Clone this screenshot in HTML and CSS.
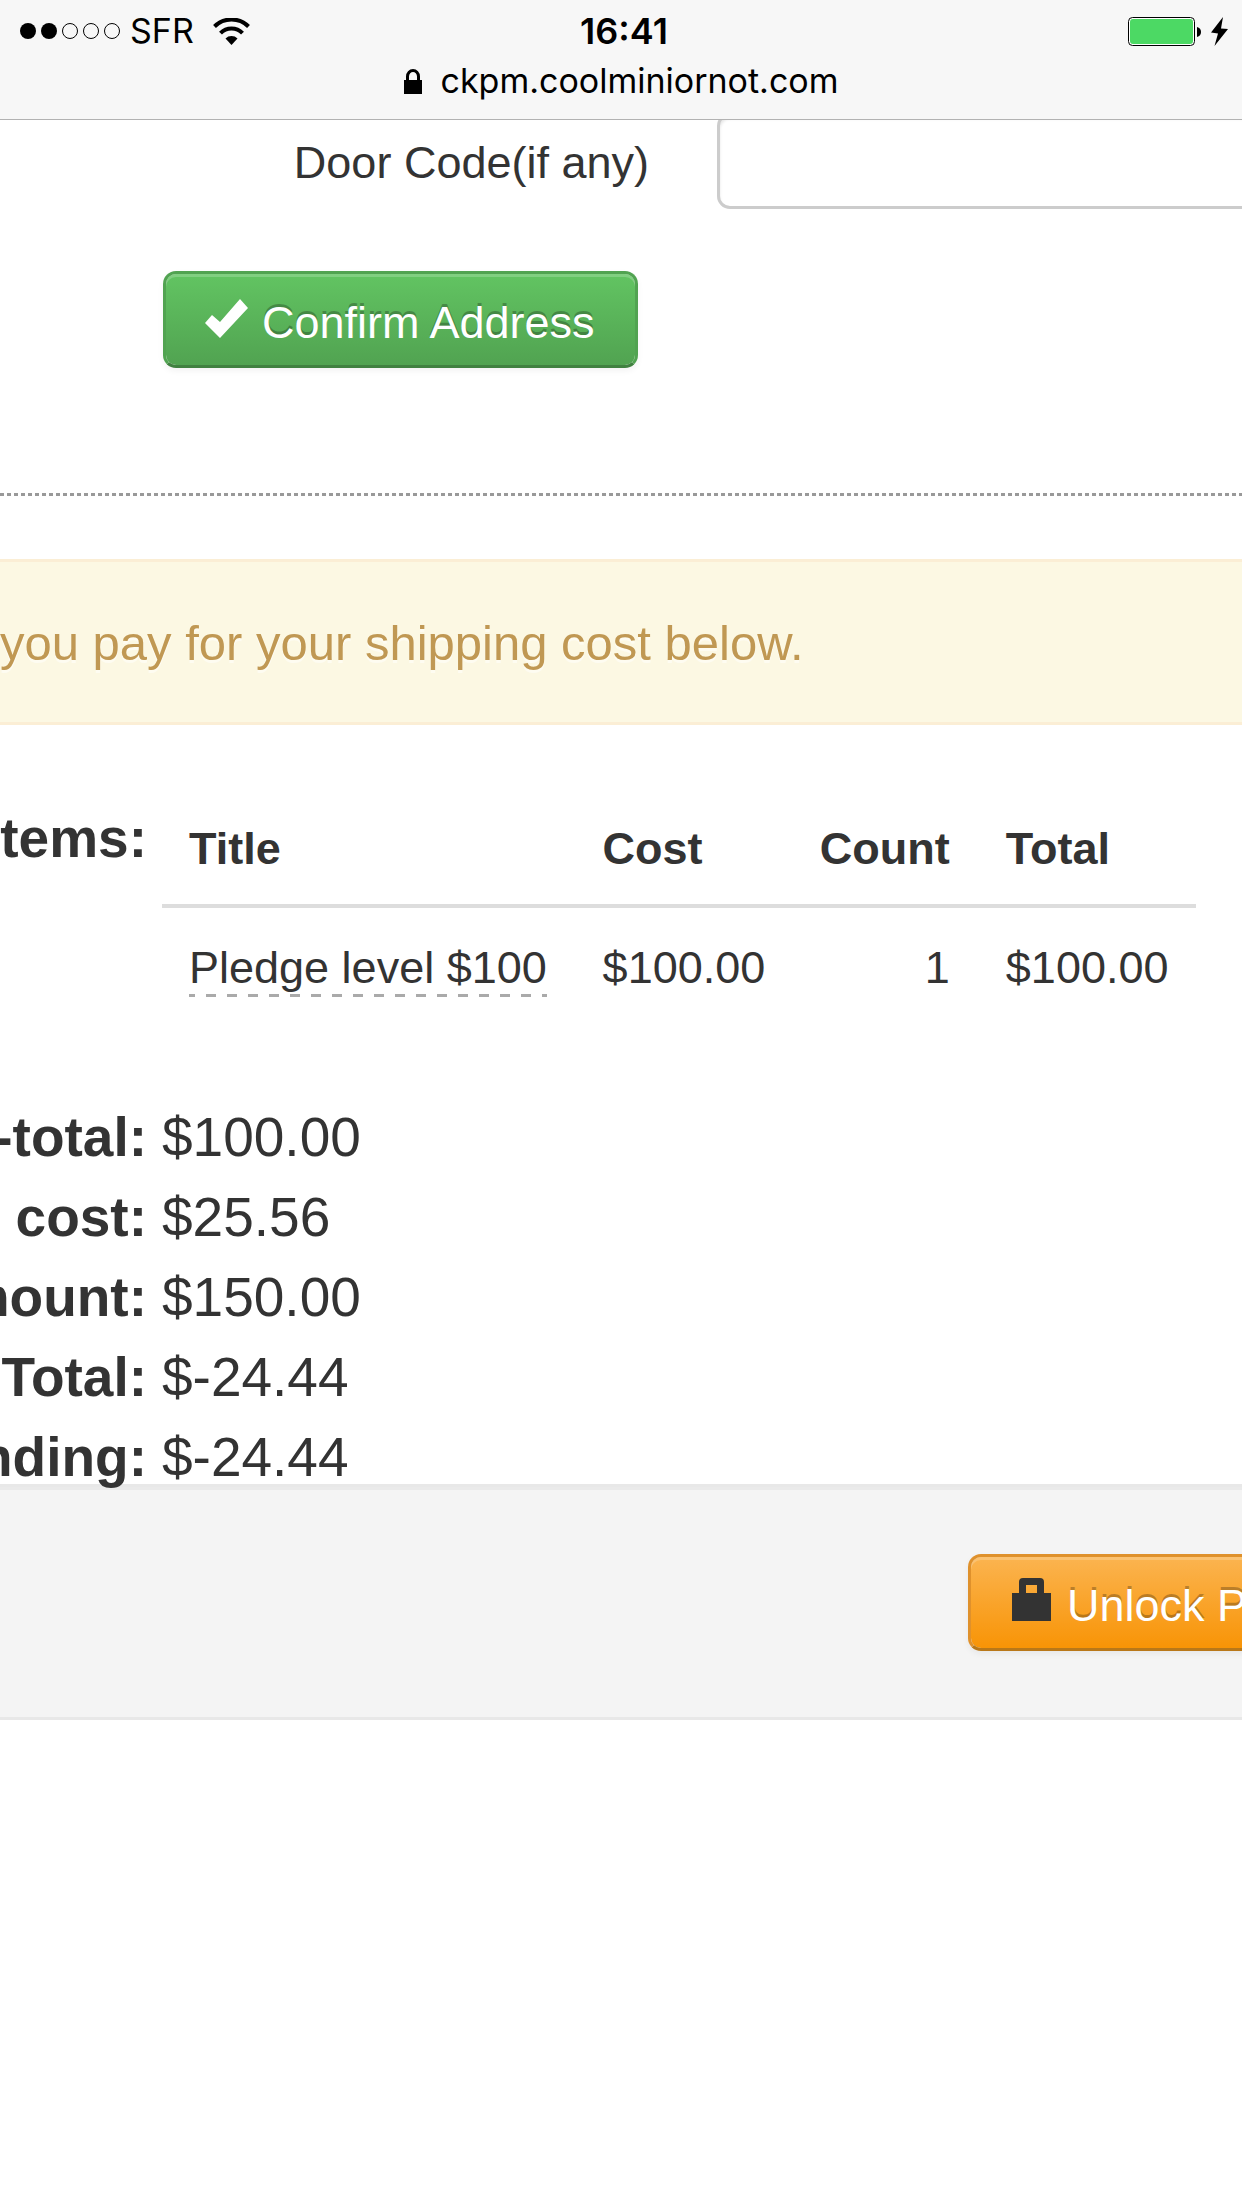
FILE: index.html
```
<!DOCTYPE html>
<html lang="en">
<head>
<meta charset="utf-8">
<meta name="viewport" content="width=device-width, initial-scale=1">
<title>ckpm.coolminiornot.com</title>
<link rel="stylesheet" href="styles.css">
</head>
<body>
<header class="browser-bar">
  <div class="status">
    <div class="status-left">
      <svg class="signal" width="100" height="16" viewBox="0 0 100 16" aria-hidden="true">
        <circle cx="8" cy="8" r="8"/><circle cx="29" cy="8" r="8"/>
        <g fill="none" stroke="#000"><circle cx="50" cy="8" r="7.5"/><circle cx="71" cy="8" r="7.5"/><circle cx="92" cy="8" r="7.5"/></g>
      </svg>
      <span class="carrier">SFR</span>
      <svg class="wifi" width="37" height="27" viewBox="0 0 37 27" aria-hidden="true">
        <g fill="none" stroke="#000" stroke-width="4"><path d="M1.500 8.500A24 24 0 0 1 35.500 8.500"/><path d="M7.500 15.200A15.200 15.200 0 0 1 29.500 15.200"/></g>
        <path d="M12.500 20.500A8.500 8.500 0 0 1 24.500 20.500L18.500 27z"/>
      </svg>
    </div>
    <time class="clock">16:41</time>
    <div class="status-right">
      <svg class="battery" width="73" height="29" viewBox="0 0 73 29" aria-hidden="true">
        <rect x=".5" y=".5" width="66" height="28" rx="4" fill="#fff" stroke="#000"/>
        <rect x="2" y="2" width="63" height="25" rx="3" fill="#4cd964"/>
        <path d="M69 10q4 1 4 5t-4 5z"/>
      </svg>
      <svg class="bolt" width="17" height="29" viewBox="0 0 17 29" aria-hidden="true"><path d="M12 0L0 15.500l7 1L3.500 29L17 12l-7-.5z"/></svg>
    </div>
  </div>
  <div class="address">
    <svg width="18" height="25" viewBox="0 0 18 25" aria-hidden="true"><path d="M0 11h18v14H0z"/><path d="M3.500 12V7.500a5.500 6 0 0 1 11 0V12" fill="none" stroke="#000" stroke-width="3"/></svg>
    <span>ckpm.coolminiornot.com</span>
  </div>
</header>
<main class="page">
  <form class="address-form">
    <div class="field">
      <label for="door-code">Door Code(if any)</label>
      <input id="door-code" type="text">
    </div>
    <button class="btn btn-success" type="button">
      <svg width="45" height="45" viewBox="0 0 45 45" aria-hidden="true"><path d="M1 28L8 20L16 27L36 4L44 13L16 43z" fill="#fff"/></svg>
      <span>Confirm Address</span>
    </button>
  </form>
  <hr class="divider">
  <p class="alert">you pay for your shipping cost below.</p>
  <dl class="summary">
    <dt>tems:</dt>
    <dd class="items">
      <table>
        <colgroup><col class="col-title"><col class="col-cost"><col class="col-count"><col class="col-total"></colgroup>
        <thead><tr><th>Title</th><th>Cost</th><th>Count</th><th>Total</th></tr></thead>
        <tbody><tr><td><span class="pledge">Pledge level $100</span></td><td>$100.00</td><td class="count">1</td><td>$100.00</td></tr></tbody>
      </table>
    </dd>
    <dt>-total:</dt><dd>$100.00</dd>
    <dt>cost:</dt><dd>$25.56</dd>
    <dt>mount:</dt><dd>$150.00</dd>
    <dt>Total:</dt><dd>$-24.44</dd>
    <dt>nding:</dt><dd>$-24.44</dd>
  </dl>
  <div class="actions">
    <button class="btn btn-warning" type="button">
      <svg width="42" height="45" viewBox="0 0 42 45" aria-hidden="true"><path d="M0 16h7V5q0-4 4-4h17q4 0 4 4v11h7v28H0zM14 16h11V8H14z" fill="#333" fill-rule="evenodd"/></svg>
      <span>Unlock P</span>
    </button>
  </div>
</main>
</body>
</html>
```
FILE: styles.css
```
* { box-sizing: border-box; }

body {
  margin: 0;
  overflow-x: hidden;
  background: #fff;
  color: #333;
  font-family: "Liberation Sans", Arial, sans-serif;
  font-size: 45px;
  line-height: 64px;
}

svg { display: block; flex: none; }

.browser-bar {
  position: relative;
  z-index: 1;
  height: 120px;
  padding: 8px 14px 0 20px;
  background: #f7f7f7;
  border-bottom: 1px solid #b2b2b2;
  color: #000;
  font-family: Inter, sans-serif;
  font-size: 34px;
  line-height: 46px;
}

.status {
  display: grid;
  grid-template-columns: 1fr auto 1fr;
  align-items: center;
}

.status-left, .status-right { display: flex; align-items: center; }
.status-left { gap: 10px; }
.wifi { margin-left: 9px; }
.status-right { justify-content: flex-end; gap: 10px; }
.clock { font-size: 36px; font-weight: 600; }

.address {
  display: flex;
  justify-content: center;
  align-items: center;
  gap: 19px;
  padding: 4px 6px 0 0;
}

.page { overflow: hidden; margin-top: -7px; }

.field {
  display: grid;
  grid-template-columns: 649px 1fr;
  gap: 68px;
  margin-right: -16px;
}

.field label { padding-top: 18px; text-align: right; }

.field input {
  width: 100%;
  height: 96px;
  padding: 12px 20px;
  border: 3px solid #ccc;
  border-radius: 13px;
  background: #fff;
  box-shadow: inset 0 3px 3px rgba(0, 0, 0, 0.1);
  color: #555;
  font: inherit;
}

.btn {
  display: flex;
  align-items: center;
  gap: 13px;
  height: 97px;
  padding: 0 40px 0 38px;
  border: 3px solid;
  border-radius: 13px;
  box-shadow: inset 0 3px 0 rgba(255, 255, 255, 0.2), 0 3px 6px rgba(0, 0, 0, 0.05);
  color: #fff;
  font: inherit;
  text-shadow: 0 -3px 0 rgba(0, 0, 0, 0.25);
  white-space: nowrap;
}

.btn span { padding-top: 6px; }

.btn-success {
  margin: 62px 0 0 163px;
  border-color: #51a351 #51a351 #408140;
  background: linear-gradient(#62c462, #51a351) padding-box;
}

.btn-warning {
  margin-left: auto;
  margin-right: -48px;
  padding-left: 41px;
  border-color: #df912c #df912c #b97819;
  background: linear-gradient(#fbb450, #f89406) padding-box;
}

.btn-success svg { margin-bottom: 4px; }
.btn-warning svg { margin-bottom: 6px; }

.divider {
  height: 3px;
  margin: 125px 0 63px;
  border: 0;
  background: repeating-linear-gradient(90deg, #999 0 4px, #fff 4px 7px);
}

.alert {
  margin: 0;
  padding: 49px 0 47px;
  border: solid #fbeed5;
  border-width: 3px 0;
  background: #fcf8e3;
  color: #c09853;
  font-size: 49px;
  text-shadow: 0 3px 0 rgba(255, 255, 255, 0.5);
  white-space: nowrap;
}

.summary {
  display: grid;
  grid-template-columns: 147px 1fr;
  column-gap: 15px;
  margin: 73px 0 -13px;
  font-size: 55px;
  line-height: 80px;
}

.summary dt {
  display: flex;
  justify-content: flex-end;
  font-weight: bold;
  white-space: nowrap;
}

.summary dd { margin: 0; }

.summary .items {
  margin: -8px 46px 73px 0;
  font-size: 45px;
  line-height: 64px;
}

table { width: 100%; border-collapse: collapse; table-layout: fixed; }
.col-title { width: 40%; }
.col-cost { width: 21%; }
.col-count { width: 18%; }
.col-total { width: 21%; }

th, td { padding: 28px 27px 24px; text-align: left; vertical-align: top; white-space: nowrap; }
th { padding: 27px 27px 23px; border-bottom: 4px solid #ddd; }
td.count { padding-right: 29px; text-align: right; }

.pledge {
  padding-bottom: 4px;
  background: repeating-linear-gradient(90deg, #aaa 0 6px, transparent 6px 17px, #aaa 17px 21px) 0 100% / 100% 3px no-repeat;
}

.actions {
  display: flex;
  padding: 67px 0 66px;
  border-top: 3px solid #e8e8e8;
  border-bottom: 3px solid #e8e8e8;
  background: #f4f4f4;
  box-shadow: inset 0 3px 0 rgba(0, 0, 0, 0.04);
}
```
